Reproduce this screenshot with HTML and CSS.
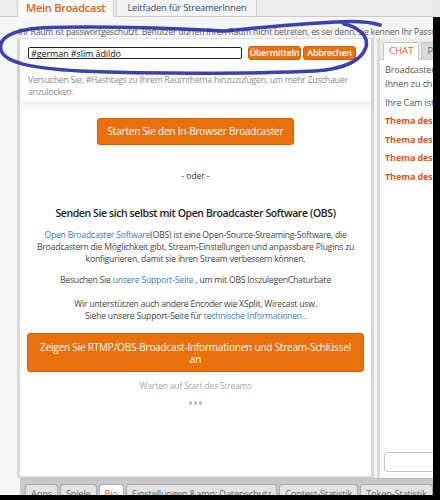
FILE: index.html
```html
<!DOCTYPE html>
<html lang="de">
<head>
<meta charset="utf-8">
<title>Mein Broadcast</title>
<link rel="stylesheet" href="styles.css">
</head>
<body>
<div class="screen">
  <div class="frame">
    <nav class="top-tabs">
      <a class="top-tab is-active">Mein Broadcast</a>
      <a class="top-tab">Leitfaden für StreamerInnen</a>
    </nav>
    <p class="notice">Ihr Raum ist passwortgeschützt. Benutzer dürfen Ihren Raum nicht betreten, es sei denn, sie kennen Ihr Passwort.</p>

    <div class="workspace">
      <section class="broadcast">
        <form class="topic">
          <div class="topic-row">
            <input class="topic-input" type="text" value="#german #slim ädildo">
            <button class="btn btn-sm" type="button">Übermitteln</button>
            <button class="btn btn-sm" type="button">Abbrechen</button>
          </div>
          <p class="hint">Versuchen Sie, #Hashtags zu Ihrem Raumthema hinzuzufügen, um mehr Zuschauer anzulocken.</p>
        </form>

        <div class="start">
          <button class="btn btn-md" type="button">Starten Sie den In-Browser Broadcaster</button>
        </div>

        <p class="or">- oder -</p>

        <h2 class="obs-title">Senden Sie sich selbst mit Open Broadcaster Software (OBS)</h2>
        <p class="copy copy-intro"><a class="link">Open Broadcaster Software</a>(OBS) ist eine Open-Source-Streaming-Software, die Broadcastern die Möglichkeit gibt, Stream-Einstellungen und anpassbare Plugins zu konfigurieren, damit sie ihren Stream verbessern können.</p>
        <p class="copy">Besuchen Sie <a class="link">unsere Support-Seite</a> , um mit OBS loszulegenChaturbate</p>
        <p class="copy copy-encoders">Wir unterstützen auch andere Encoder wie XSplit, Wirecast usw.<br>Siehe unsere Support-Seite für <a class="link">technische Informationen</a> .</p>

        <div class="rtmp">
          <button class="btn btn-lg" type="button">Zeigen Sie RTMP/OBS-Broadcast-Informationen und Stream-Schlüssel an</button>
        </div>

        <p class="waiting">Warten auf Start des Streams</p>
        <div class="dots" aria-label="lädt"><span></span><span></span><span></span></div>
      </section>

      <aside class="chat">
        <div class="chat-tabs">
          <a class="chat-tab is-active">CHAT</a>
          <a class="chat-tab">PM</a>
        </div>
        <div class="chat-log">
          <div class="msg">Broadcaster-Tipp: Ihre Zuschauer freuen sich, mit<br>Ihnen zu chatten!</div>
          <div class="msg">Ihre Cam ist derzeit offline.</div>
          <div class="msg msg-topic">Thema des Raums geändert</div>
          <div class="msg msg-topic">Thema des Raums geändert</div>
          <div class="msg msg-topic">Thema des Raums geändert</div>
          <div class="msg msg-topic">Thema des Raums geändert</div>
        </div>
        <input class="chat-input" type="text">
      </aside>
    </div>

    <nav class="bottom-tabs">
      <a class="bottom-tab">Apps</a>
      <a class="bottom-tab">Spiele</a>
      <a class="bottom-tab is-active">Bio</a>
      <a class="bottom-tab">Einstellungen &amp;amp; Datenschutz</a>
      <a class="bottom-tab">Contest-Statistik</a>
      <a class="bottom-tab">Token-Statistik</a>
    </nav>
  </div>
  <div class="edge"></div>
</div>

<!-- hand-drawn marker ring around the topic form -->
<svg class="marker" width="440" height="100" viewBox="0 0 440 100" aria-hidden="true">
  <path d="M380 25 C368 21 352 21 335 22 C300 24 265 27 225 31 C180 29 110 25 40 28 C12 30 -2 38 1 50 C4 62 28 68 80 71 C150 74 250 74 315 71 C345 69 362 60 366 47 C369 36 358 27 344 24"
        fill="none" stroke="#2c30a8" stroke-width="3.6" stroke-linecap="round" stroke-linejoin="round" opacity="0.92"/>
</svg>
</body>
</html>
```

FILE: styles.css
```css
* { box-sizing: border-box; }

html, body {
  margin: 0;
  padding: 0;
}

body {
  width: 440px;
  height: 500px;
  background: #000;
  overflow: hidden;
  position: relative;
  font-family: "Open Sans", "Noto Sans", sans-serif;
  color: #444;
}

a { cursor: pointer; }

p { margin: 0; }

.screen {
  display: flex;
  height: 495px;
}

.frame {
  width: 433px;
  height: 495px;
  overflow: hidden;
  background: #f6f6f6;
  display: flex;
  flex-direction: column;
}

.edge {
  width: 7px;
  height: 17px;
  background: #e8e8e8;
}

/* top tab strip */
.top-tabs {
  display: flex;
  align-items: flex-end;
  height: 17px;
  padding-left: 17px;
  background: #ebebeb;
  border-bottom: 1px solid #c9c9c9;
  flex-shrink: 0;
}

.top-tab {
  height: 17px;
  margin-right: 2px;
  padding: 0 10px;
  border: 1px solid #cdcdcd;
  border-bottom: none;
  background: #f3f3f3;
  color: #34507a;
  font-size: 9.4px;
  letter-spacing: -0.2px;
  line-height: 16px;
  white-space: nowrap;
}

.top-tab.is-active {
  height: 18px;
  margin-bottom: -1px;
  background: #fbfbfb;
  color: #e0600f;
  font-size: 11px;
  font-weight: 600;
  letter-spacing: -0.25px;
  padding: 0 8px;
  line-height: 15px;
}

.notice {
  height: 21px;
  padding: 9px 0 0 18px;
  font-size: 8.6px;
  letter-spacing: -0.2px;
  line-height: 12px;
  color: #5a5a5a;
  white-space: nowrap;
  flex-shrink: 0;
}

/* main area */
.workspace {
  display: flex;
  height: 440px;
  margin-left: 17px;
  flex-shrink: 0;
}

.broadcast {
  width: 357px;
  flex-shrink: 0;
  background: #fff;
  border: 3px solid #d8d8d8;
  border-top: 1px solid #dedede;
  border-bottom-width: 2px;
  text-align: center;
  color: #3c3c3c;
}

.topic {
  height: 63px;
  margin: 1px 0 0;
  padding: 6px 8px 0;
  text-align: left;
  background: #fff;
  border-bottom: 1px solid #ececec;
  box-shadow: 0 3px 5px rgba(0, 0, 0, 0.07);
}

.topic-row {
  display: flex;
  align-items: center;
  gap: 2px;
  height: 14px;
}

.topic-input {
  width: 214px;
  height: 12px;
  margin: 0 4px 0 0;
  padding: 0 2px;
  border: 1px solid #222;
  border-radius: 2px;
  font-family: inherit;
  font-size: 9px;
  letter-spacing: -0.1px;
  line-height: 10px;
  color: #111;
  background: #fff;
  outline: none;
}

.hint {
  margin-top: 14px;
  font-size: 8.6px;
  letter-spacing: -0.2px;
  line-height: 12px;
  color: #8a8a8a;
}

.btn {
  font-family: inherit;
  color: #fff;
  background: #ea700c;
  border: 1px solid #d25f03;
  border-radius: 3px;
  cursor: pointer;
  white-space: nowrap;
}

.btn-sm {
  width: 53px;
  height: 14px;
  padding: 0;
  font-size: 8.8px;
  font-weight: 600;
  letter-spacing: -0.2px;
  line-height: 12px;
  text-align: center;
}

.start {
  margin-top: 15px;
}

.btn-md {
  height: 27px;
  padding: 0 10px;
  font-size: 10px;
  letter-spacing: -0.2px;
  line-height: 25px;
}

.or {
  margin-top: 25px;
  font-size: 8.4px;
  line-height: 12px;
  color: #333;
}

.obs-title {
  margin: 23px 0 0;
  font-size: 10.5px;
  font-weight: 600;
  letter-spacing: -0.4px;
  line-height: 16px;
  color: #222;
}

.copy {
  font-size: 8.6px;
  letter-spacing: -0.2px;
  line-height: 12px;
  color: #444;
  padding: 0 8px;
  margin-top: 9px;
}

.copy-intro {
  margin-top: 8px;
}

.copy-encoders {
  margin-top: 12px;
}

.link {
  color: #3a7eac;
}

.rtmp {
  margin-top: 11px;
  padding: 0 7px;
}

.btn-lg {
  width: 100%;
  height: 39px;
  padding: 0 6px;
  font-size: 10px;
  letter-spacing: -0.2px;
  line-height: 12px;
  white-space: normal;
}

.waiting {
  margin-top: 8px;
  font-size: 8.6px;
  letter-spacing: -0.2px;
  line-height: 12px;
  color: #a8a8a8;
}

/* three grey loading dots */
.dots {
  display: flex;
  justify-content: center;
  gap: 1.5px;
  margin-top: 9px;
}

.dots span {
  width: 3.5px;
  height: 3.5px;
  border-radius: 50%;
  background: #bdbdbd;
}

/* chat column */
.chat {
  width: 200px;
  flex-shrink: 0;
  margin-left: 3px;
  background: #fff;
  border-left: 3px solid #dcdcdc;
  display: flex;
  flex-direction: column;
}

.chat-tabs {
  display: flex;
  align-items: flex-end;
  height: 22px;
  padding-left: 3px;
  gap: 2px;
  background: #ececec;
  border-bottom: 1px solid #d0d0d0;
}

.chat-tab {
  height: 17px;
  padding: 0 5px;
  font-size: 9.6px;
  line-height: 16px;
  color: #666;
  background: #dadada;
  border: 1px solid #c7c7c7;
  border-bottom: none;
  border-radius: 2px 2px 0 0;
}

.chat-tab.is-active {
  height: 18px;
  margin-bottom: -1px;
  background: #fff;
  color: #e5641c;
}

.chat-log {
  flex: 1;
  padding: 3px 0 0 5px;
}

.msg {
  font-size: 9px;
  letter-spacing: -0.1px;
  line-height: 14px;
  color: #555;
  white-space: nowrap;
  margin-bottom: 4.5px;
}

.msg-topic {
  font-weight: 700;
  color: #e0561d;
}

.chat-input {
  height: 20px;
  margin: 0 0 6px 4px;
  border: 1px solid #c8c8c8;
  border-radius: 3px;
  background: #fff;
}

/* bottom tab strip */
.bottom-tabs {
  display: flex;
  gap: 2px;
  margin-left: 20px;
  padding: 5px 0 0 5px;
  height: 40px;
  background: #c9c9c9;
  border-top: 1px solid #bcbcbc;
}

.bottom-tab {
  height: 20px;
  padding: 0 5px;
  font-size: 9.4px;
  letter-spacing: -0.25px;
  line-height: 18px;
  color: #666;
  background: #e3e3e3;
  border: 1px solid #a9a9a9;
  border-bottom: none;
  border-radius: 3px 3px 0 0;
  white-space: nowrap;
}

.bottom-tab.is-active {
  background: #fff;
  color: #e5641c;
}

.marker {
  position: absolute;
  top: 0;
  left: 0;
  pointer-events: none;
}
```
